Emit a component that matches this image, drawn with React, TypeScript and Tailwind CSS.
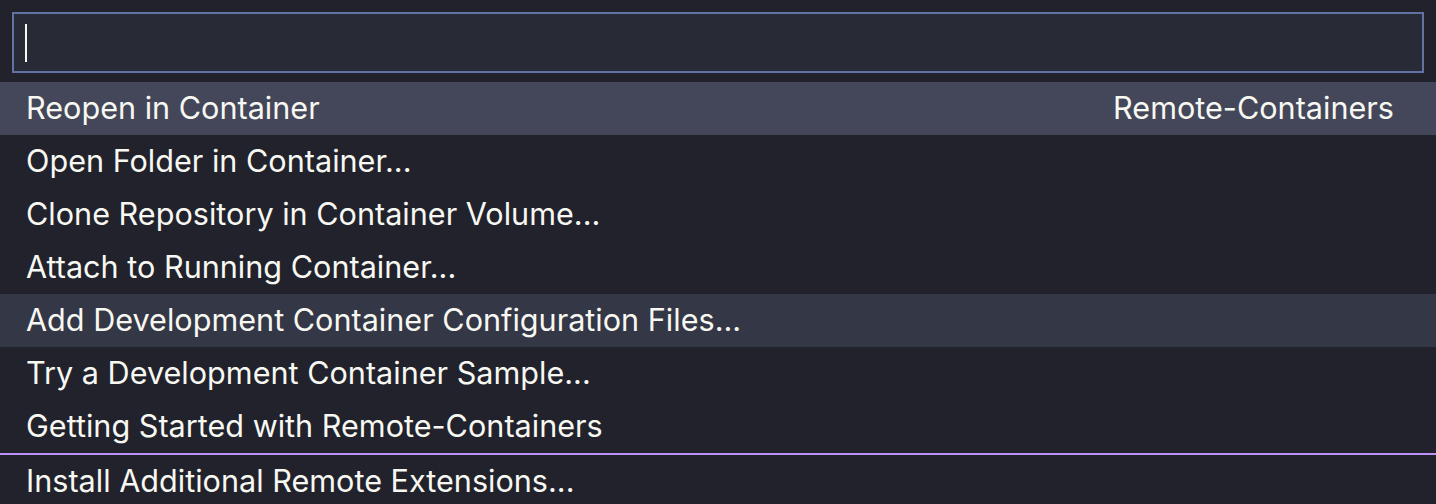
import React from "react";

const items: { label: string; detail?: string; state?: "active" | "hover"; separator?: boolean }[] = [
  { label: "Reopen in Container", detail: "Remote-Containers", state: "active" },
  { label: "Open Folder in Container..." },
  { label: "Clone Repository in Container Volume..." },
  { label: "Attach to Running Container..." },
  { label: "Add Development Container Configuration Files...", state: "hover" },
  { label: "Try a Development Container Sample..." },
  { label: "Getting Started with Remote-Containers" },
  { label: "Install Additional Remote Extensions...", separator: true },
];

export default function App() {
  return (
    <div
      className="w-[1436px] h-[504px] overflow-hidden bg-[#21222c] text-[#f8f8f2] flex flex-col"
      style={{ fontFamily: "Inter, 'Noto Sans', sans-serif" }}
    >
      <div className="px-[12px] pt-[12px] pb-[9px]">
        <div className="h-[61px] w-[1412px] border-2 border-[#6272a4] bg-[#282a36] flex items-center pl-[11px]">
          <div className="w-[2px] h-[38px] bg-[#f8f8f2]" />
        </div>
      </div>
      <div className="flex flex-col">
        {items.map((it, i) => (
          <div
            key={i}
            className={
              "flex items-center justify-between pl-[26px] pr-[42px] text-[30.6px] leading-none " +
              (it.separator ? "h-[55px] border-t-2 border-[#bd93f9] " : "h-[53px] ") +
              (it.state === "active" ? "bg-[#44475a]" : it.state === "hover" ? "bg-[#343746]" : "")
            }
          >
            <span>{it.label}</span>
            {it.detail && <span>{it.detail}</span>}
          </div>
        ))}
      </div>
    </div>
  );
}
